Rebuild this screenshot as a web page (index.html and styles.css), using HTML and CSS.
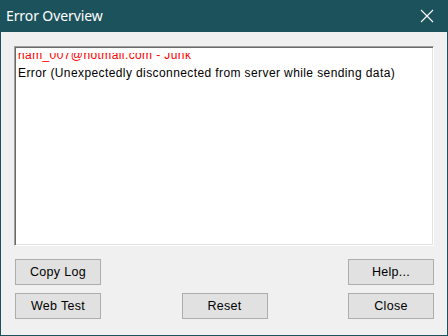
FILE: index.html
```html
<!DOCTYPE html>
<html>
<head>
<meta charset="utf-8">
<link rel="stylesheet" href="styles.css">
</head>
<body>
<div class="window">
  <div class="titlebar">
    <span class="title">Error Overview</span>
    <svg class="close" width="14" height="14" viewBox="0 0 14 14"><path d="M1 1 L13 13 M13 1 L1 13" stroke="#fff" stroke-width="1.1" fill="none"/></svg>
  </div>
  <div class="content">
    <div class="log">
      <div class="clip">
        <div class="lines">
          <div class="line red">ham_007@hotmail.com - Junk</div>
          <div class="line">Error (Unexpectedly disconnected from server while sending data)</div>
        </div>
      </div>
    </div>
    <div class="row row1">
      <button class="btn">Copy Log</button>
      <button class="btn">Help...</button>
    </div>
    <div class="row row2">
      <button class="btn">Web Test</button>
      <button class="btn">Reset</button>
      <button class="btn">Close</button>
    </div>
  </div>
</div>
</body>
</html>
```
FILE: styles.css
```css
* { box-sizing: border-box; }
html, body { margin: 0; padding: 0; background: #1b525c; }
body { width: 448px; height: 336px; overflow: hidden; }
.window {
  width: 448px;
  height: 336px;
  background: #1b525c;
  display: flex;
  flex-direction: column;
  padding: 0 1px 1px 1px;
}
.titlebar {
  height: 32px;
  flex: none;
  display: flex;
  align-items: center;
  justify-content: space-between;
  padding: 0 13px 0 5px;
}
.title {
  color: #fff;
  font-family: "Noto Sans", "Open Sans", sans-serif;
  font-size: 14px;
  letter-spacing: -0.1px;
  margin-top: -1px;
}
.close { display: block; margin-top: -1px; }
.content {
  flex: 1;
  background: #f0f0f0;
  padding: 14px 13px 0 13px;
  display: flex;
  flex-direction: column;
}
.log {
  height: 200px;
  background: #fff;
  border-top: 1px solid #a0a0a0;
  border-left: 1px solid #a0a0a0;
  border-right: 1px solid #fff;
  border-bottom: 1px solid #fff;
  box-shadow: inset 1px 1px 0 #696969, inset -1px -1px 0 #e3e3e3;
  padding: 6px 2px 2px 2px;
}
.clip { height: 100%; overflow: hidden; }
.lines { margin-top: -7px; padding-left: 1px; }
.line {
  font-family: "Liberation Sans", Arial, sans-serif;
  font-size: 12px;
  letter-spacing: 0.4px;
  line-height: 18px;
  color: #000;
  white-space: nowrap;
}
.red { color: #ff0000; }
.row {
  display: flex;
  justify-content: space-between;
  padding-left: 1px;
}
.row1 { margin-top: 13px; }
.row2 { margin-top: 8px; }
.btn {
  width: 86px;
  height: 26px;
  background: #e1e1e1;
  border: 1px solid #adadad;
  border-radius: 0;
  margin: 0;
  padding: 0;
  font-family: "Liberation Sans", Arial, sans-serif;
  font-size: 12.5px;
  letter-spacing: 0.3px;
  color: #000;
}
```
